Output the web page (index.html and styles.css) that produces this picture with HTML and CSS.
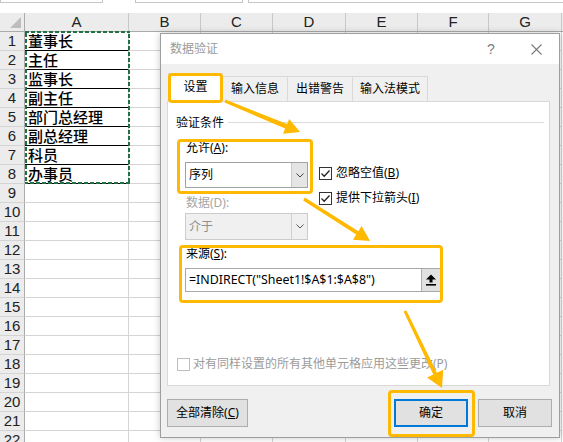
FILE: index.html
```html
<!DOCTYPE html>
<html lang="zh-CN">
<head>
<meta charset="utf-8">
<title>数据验证</title>
<link rel="stylesheet" href="styles.css">
</head>
<body>
<div class="sheet">
  <div class="topbar"><div class="fbox fb1"></div><div class="fbox fb2"></div><div class="fbox fb3"></div></div>
  <div class="cols">
    <div class="ch corner"><svg width="24" height="18" viewBox="0 0 24 18"><polygon points="21,4 21,15 10,15" fill="#bdbdbd"/></svg></div>
    <div class="ch">A</div><div class="ch">B</div><div class="ch">C</div><div class="ch">D</div><div class="ch">E</div><div class="ch">F</div><div class="ch">G</div>
  </div>
  <div class="grid">
    <div class="rh">1</div><div class="c a">董事长</div><div class="c"></div><div class="c"></div><div class="c"></div><div class="c"></div><div class="c"></div><div class="c"></div>
    <div class="rh">2</div><div class="c a">主任</div><div class="c"></div><div class="c"></div><div class="c"></div><div class="c"></div><div class="c"></div><div class="c"></div>
    <div class="rh">3</div><div class="c a">监事长</div><div class="c"></div><div class="c"></div><div class="c"></div><div class="c"></div><div class="c"></div><div class="c"></div>
    <div class="rh">4</div><div class="c a">副主任</div><div class="c"></div><div class="c"></div><div class="c"></div><div class="c"></div><div class="c"></div><div class="c"></div>
    <div class="rh">5</div><div class="c a">部门总经理</div><div class="c"></div><div class="c"></div><div class="c"></div><div class="c"></div><div class="c"></div><div class="c"></div>
    <div class="rh">6</div><div class="c a">副总经理</div><div class="c"></div><div class="c"></div><div class="c"></div><div class="c"></div><div class="c"></div><div class="c"></div>
    <div class="rh">7</div><div class="c a">科员</div><div class="c"></div><div class="c"></div><div class="c"></div><div class="c"></div><div class="c"></div><div class="c"></div>
    <div class="rh">8</div><div class="c a">办事员</div><div class="c"></div><div class="c"></div><div class="c"></div><div class="c"></div><div class="c"></div><div class="c"></div>
    <div class="rh">9</div><div class="c"></div><div class="c"></div><div class="c"></div><div class="c"></div><div class="c"></div><div class="c"></div><div class="c"></div>
    <div class="rh">10</div><div class="c"></div><div class="c"></div><div class="c"></div><div class="c"></div><div class="c"></div><div class="c"></div><div class="c"></div>
    <div class="rh">11</div><div class="c"></div><div class="c"></div><div class="c"></div><div class="c"></div><div class="c"></div><div class="c"></div><div class="c"></div>
    <div class="rh">12</div><div class="c"></div><div class="c"></div><div class="c"></div><div class="c"></div><div class="c"></div><div class="c"></div><div class="c"></div>
    <div class="rh">13</div><div class="c"></div><div class="c"></div><div class="c"></div><div class="c"></div><div class="c"></div><div class="c"></div><div class="c"></div>
    <div class="rh">14</div><div class="c"></div><div class="c"></div><div class="c"></div><div class="c"></div><div class="c"></div><div class="c"></div><div class="c"></div>
    <div class="rh">15</div><div class="c"></div><div class="c"></div><div class="c"></div><div class="c"></div><div class="c"></div><div class="c"></div><div class="c"></div>
    <div class="rh">16</div><div class="c"></div><div class="c"></div><div class="c"></div><div class="c"></div><div class="c"></div><div class="c"></div><div class="c"></div>
    <div class="rh">17</div><div class="c"></div><div class="c"></div><div class="c"></div><div class="c"></div><div class="c"></div><div class="c"></div><div class="c"></div>
    <div class="rh">18</div><div class="c"></div><div class="c"></div><div class="c"></div><div class="c"></div><div class="c"></div><div class="c"></div><div class="c"></div>
    <div class="rh">19</div><div class="c"></div><div class="c"></div><div class="c"></div><div class="c"></div><div class="c"></div><div class="c"></div><div class="c"></div>
    <div class="rh">20</div><div class="c"></div><div class="c"></div><div class="c"></div><div class="c"></div><div class="c"></div><div class="c"></div><div class="c"></div>
    <div class="rh">21</div><div class="c"></div><div class="c"></div><div class="c"></div><div class="c"></div><div class="c"></div><div class="c"></div><div class="c"></div>
    <div class="rh">22</div><div class="c"></div><div class="c"></div><div class="c"></div><div class="c"></div><div class="c"></div><div class="c"></div><div class="c"></div>
    <div class="ants"><svg width="100%" height="100%"><rect x="0" y="0" width="100%" height="100%" fill="none" stroke="#1f7044" stroke-width="4" stroke-dasharray="4 2"/></svg></div>
  </div>
</div>

<div class="dialog">
  <div class="titlebar">
    <span class="title">数据验证</span>
    <span class="help">?</span>
    <span class="close"><svg width="11" height="11" viewBox="0 0 11 11"><path d="M0.5 0.5 L10.5 10.5 M10.5 0.5 L0.5 10.5" stroke="#7a7a7a" stroke-width="1.1" fill="none"/></svg></span>
  </div>
  <div class="dbody">
    <div class="tabs">
      <div class="tab sel">设置</div>
      <div class="tab t2">输入信息</div>
      <div class="tab t3">出错警告</div>
      <div class="tab t4">输入法模式</div>
    </div>
    <div class="panel">
      <div class="gtitle"><span>验证条件</span><span class="gline"></span></div>
      <div class="criteria">
        <div class="leftcol">
          <div class="lbl">允许(<u>A</u>):</div>
          <div class="combo">
            <span class="val">序列</span>
            <span class="dd"><svg width="8" height="5" viewBox="0 0 8 5"><polyline points="0.5,0.5 4,4 7.5,0.5" fill="none" stroke="#444" stroke-width="1"/></svg></span>
          </div>
          <div class="lbl dis dlbl">数据(D):</div>
          <div class="combo dis dcombo">
            <span class="val">介于</span>
            <span class="dd"><svg width="8" height="5" viewBox="0 0 8 5"><polyline points="0.5,0.5 4,4 7.5,0.5" fill="none" stroke="#555" stroke-width="1"/></svg></span>
          </div>
        </div>
        <div class="rightcol">
          <div class="chk"><span class="cb"><svg width="11" height="11" viewBox="0 0 11 11"><polyline points="1.5,5.5 4.2,8.2 9.5,2.5" fill="none" stroke="#222" stroke-width="1.3"/></svg></span><span>忽略空值(<u>B</u>)</span></div>
          <div class="chk chk2"><span class="cb"><svg width="11" height="11" viewBox="0 0 11 11"><polyline points="1.5,5.5 4.2,8.2 9.5,2.5" fill="none" stroke="#222" stroke-width="1.3"/></svg></span><span>提供下拉箭头(<u>I</u>)</span></div>
        </div>
      </div>
      <div class="source">
        <div class="lbl">来源(<u>S</u>):</div>
        <div class="srcinput">
          <span class="srcval">=INDIRECT("Sheet1!$A$1:$A$8")</span>
          <span class="upbtn"><svg width="10" height="12" viewBox="0 0 10 12"><polygon points="0,5.5 5,0.5 10,5.5 6.5,5.5 6.5,8.5 3.5,8.5 3.5,5.5" fill="#000"/><rect x="0" y="10" width="10" height="1.6" fill="#000"/></svg></span>
        </div>
      </div>
      <div class="chk applyall"><span class="cb dis"></span><span class="distext">对有同样设置的所有其他单元格应用这些更改(P)</span></div>
    </div>
    <div class="btnrow">
      <button class="btn clear">全部清除(<u>C</u>)</button>
      <span class="spacer"></span>
      <button class="btn ok">确定</button>
      <button class="btn cancel">取消</button>
    </div>
  </div>
</div>

<div class="hl hl-tab"></div>
<div class="hl hl-allow"></div>
<div class="hl hl-src"></div>
<div class="hl hl-ok"></div>

<svg class="arrows" width="563" height="442" viewBox="0 0 563 442">
  <polygon fill="#ffb900" points="225.4,99.6 287.1,124.0 289.2,118.9 300,132 283.0,133.7 285.1,128.6 224.6,102.4"/>
  <polygon fill="#ffb900" points="304.8,197.5 358.4,231.2 361.6,226.1 370,241 353.0,239.7 356.2,234.6 303.2,200.5"/>
  <polygon fill="#ffb900" points="406.4,310.4 436.9,372.7 443.2,369.7 442,388 427.0,377.5 433.3,374.5 403.6,311.6"/>
</svg>
</body>
</html>
```
FILE: styles.css
```css
* { box-sizing: border-box; }
body {
  margin: 0;
  width: 563px;
  height: 442px;
  overflow: hidden;
  position: relative;
  background: #ffffff;
  font-family: "Noto Sans", "Noto Sans CJK SC", sans-serif;
  font-size: 12px;
  color: #000;
}

/* ---------- sheet ---------- */
.topbar { height: 13px; display: flex; align-items: flex-start; }
.fbox { height: 3px; border: 1px solid #c6c6c6; border-top: none; background: #fff; }
.fb1 { width: 103px; }
.fb2 { width: 108px; margin-left: 32px; }
.fb3 { flex: 1; margin-left: 5px; border-right: none; }

.cols, .grid {
  display: grid;
  grid-template-columns: 25px 104px 72px 72px 73px 72px 71px 73px;
}
.cols { height: 19px; background: #ececec; border-bottom: 1px solid #ababab; }
.ch {
  border-right: 1px solid #c8c8c8;
  text-align: center;
  font: 15px/18px "Liberation Sans", sans-serif;
  color: #222;
}
.corner { border-right-color: #ababab; }
.corner svg { display: block; }

.grid { grid-auto-rows: 19px; position: relative; }
.rh {
  background: #ececec;
  border-right: 1px solid #ababab;
  border-bottom: 1px solid #d4d4d4;
  font: 15px/18px "Liberation Sans", sans-serif;
  text-align: center;
  color: #222;
}
.c { border-right: 1px solid #d4d4d4; border-bottom: 1px solid #d4d4d4; }
.a {
  border-bottom-color: #000;
  font: 500 15px/18px "Noto Sans CJK SC", sans-serif;
  padding-left: 3px;
  color: #000;
  white-space: nowrap;
}
.ants {
  position: absolute;
  left: 25px;
  top: -1px;
  width: 105px;
  height: 153px;
  pointer-events: none;
}
.ants svg { display: block; }

/* ---------- dialog ---------- */
.dialog {
  position: absolute;
  left: 160px;
  top: 33px;
  width: 400px;
  height: 405px;
  border: 1px solid #9e9e9e;
  background: #f0f0f0;
  box-shadow: 0 0 7px rgba(0,0,0,0.22);
  z-index: 3;
}
.titlebar {
  height: 30px;
  background: #fff;
  display: flex;
  align-items: center;
  padding-left: 9px;
}
.title { color: #9a9a9a; font-size: 12px; line-height: 16px; flex: 1; }
.help {
  width: 14px;
  margin-right: 15px;
  text-align: center;
  color: #7d7d7d;
  font: 14px/16px "Liberation Sans", sans-serif;
}
.close { width: 46px; display: flex; justify-content: center; align-items: center; }
.close svg { display: block; }

.dbody { padding: 9px 7px 10px 6px; }

.tabs {
  display: flex;
  align-items: flex-end;
  height: 28px;
  margin-left: 1px;
  position: relative;
  z-index: 1;
}
.tab {
  height: 25px;
  border: 1px solid #d9d9d9;
  border-bottom: none;
  background: #f0f0f0;
  display: flex;
  align-items: center;
  justify-content: center;
  font-size: 12px;
  line-height: 16px;
  margin-left: -1px;
}
.tab.sel { height: 29px; margin-bottom: -1px; background: #fff; width: 55px; margin-left: 0; padding-bottom: 2px; }
.t2 { width: 66px; }
.t3 { width: 66px; }
.t4 { width: 76px; }

.panel {
  width: 383px;
  height: 285px;
  border: 1px solid #d9d9d9;
  background: #fff;
  padding: 13px 5px 0 8px;
}
.gtitle { display: flex; align-items: center; height: 16px; line-height: 16px; }
.gline { flex: 1; height: 1px; background: #dcdcdc; margin-left: 4px; margin-top: -1px; }

.criteria { display: flex; margin-top: 9px; margin-left: 9px; }
.leftcol { width: 123px; display: flex; flex-direction: column; }
.lbl { height: 16px; line-height: 16px; padding-left: 1px; white-space: nowrap; }
.lbl.dis { color: #a6a6a6; }
.combo {
  margin-top: 6px;
  height: 26px;
  border: 1px solid #a2a2a2;
  background: #fff;
  display: flex;
}
.combo .val { flex: 1; padding-left: 3px; line-height: 24px; }
.combo .dd {
  width: 16px;
  background: #e5e5e5;
  border-left: 1px solid #c9c9c9;
  display: flex;
  align-items: center;
  justify-content: center;
}
.combo .dd svg { display: block; }
.dlbl { margin-top: 7px; }
.dcombo { margin-top: 2px; height: 27px; background: #f0f0f0; border-color: #cccccc; }
.dcombo .val { color: #8f8f8f; line-height: 25px; }
.dcombo .dd { background: #f0f0f0; border-left-color: #d0d0d0; }

.rightcol { margin-left: 11px; margin-top: 25px; }
.chk { display: flex; align-items: center; height: 16px; line-height: 16px; white-space: nowrap; }
.chk .cb {
  width: 13px;
  height: 13px;
  border: 1px solid #333;
  background: #fff;
  display: flex;
  align-items: center;
  justify-content: center;
  margin-right: 4px;
  flex: none;
}
.chk .cb svg { display: block; }
.chk2 { margin-top: 9px; }

.source { margin-top: 6px; margin-left: 9px; }
.srcinput {
  margin-top: 6px;
  width: 256px;
  height: 24px;
  border: 1px solid #a8a8a8;
  display: flex;
  background: #fff;
}
.srcval { flex: 1; padding-left: 3px; line-height: 22px; font-size: 12.4px; white-space: nowrap; }
.upbtn {
  width: 19px;
  background: #e1e1e1;
  border-left: 1px solid #adadad;
  display: flex;
  align-items: center;
  justify-content: center;
}
.upbtn svg { display: block; }

.applyall { margin-top: 64px; margin-left: 1px; }
.applyall .cb.dis { border-color: #bdbdbd; margin-right: 3px; }
.distext { color: #9b9b9b; }

.btnrow { display: flex; margin-top: 13px; width: 385px; height: 28px; }
.spacer { flex: 1; }
.btn {
  font-family: "Noto Sans", "Noto Sans CJK SC", sans-serif;
  font-size: 12px;
  line-height: 16px;
  color: #000;
  height: 28px;
  background: #e1e1e1;
  border: 1px solid #adadad;
  padding: 0;
  margin: 0;
}
.clear { width: 81px; }
.ok { width: 74px; border: 2px solid #0078d7; margin-right: 10px; }
.cancel { width: 74px; }

/* ---------- annotations ---------- */
.hl {
  position: absolute;
  border: 3px solid #ffb900;
  border-radius: 4px;
  z-index: 5;
  pointer-events: none;
}
.hl-tab { left: 168px; top: 73px; width: 55px; height: 30px; }
.hl-allow { left: 177px; top: 139px; width: 136px; height: 55px; }
.hl-src { left: 179px; top: 245px; width: 264px; height: 58px; }
.hl-ok { left: 388px; top: 390px; width: 87px; height: 47px; }

.arrows {
  position: absolute;
  left: 0;
  top: 0;
  z-index: 6;
  pointer-events: none;
}
```
